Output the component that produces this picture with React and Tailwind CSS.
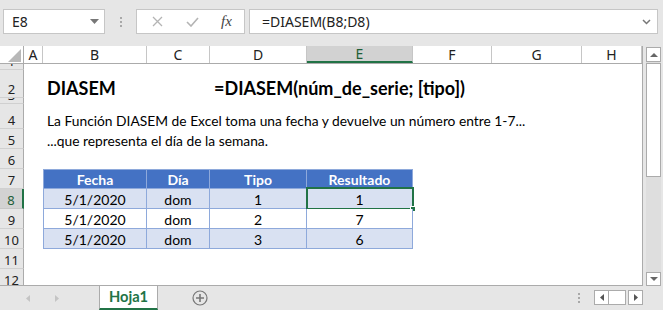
import React from "react";

const COLS = [
  { key: "A", w: "w-[19px]" },
  { key: "B", w: "w-[104px]" },
  { key: "C", w: "w-[63px]" },
  { key: "D", w: "w-[97px]" },
  { key: "E", w: "w-[106px]" },
  { key: "F", w: "w-[79px]" },
  { key: "G", w: "w-[90px]" },
  { key: "H", w: "w-[60px]" },
];

const TABLE = [
  ["5/1/2020", "dom", "1", "1"],
  ["5/1/2020", "dom", "2", "7"],
  ["5/1/2020", "dom", "3", "6"],
];

const cellFont = { fontFamily: "Lato, 'Liberation Sans', sans-serif" };
const uiFont = { fontFamily: "'Noto Sans', 'Open Sans', sans-serif" };

function RowHead({ label, h, selected }) {
  return (
    <div
      className={`${h} w-[24px] shrink-0 overflow-hidden flex items-end justify-center border-b border-r text-[13px] leading-[16px] ${
        selected
          ? "bg-[#d2d2d2] border-b-[#c6c6c6] border-r-2 border-r-[#217346] text-[#1e5e38]"
          : "bg-[#e6e6e6] border-b-[#d0d0d0] border-r-[#ababab] text-[#222]"
      }`}
      style={uiFont}>
      {label}
    </div>
  );
}

function TextRow({ label, h, children }) {
  return (
    <div className={`flex ${h} shrink-0`}>
      <RowHead h={h} label={label} />
      <div className="relative flex-1 flex items-end" style={cellFont}>
        {children}
      </div>
    </div>
  );
}

function TableRow({ label, cells, header, striped, selected }) {
  const widths = ["w-[104px]", "w-[63px]", "w-[97px]", "w-[106px]"];
  return (
    <div className="flex h-[20px] shrink-0" style={cellFont}>
      <RowHead h="h-[20px]" label={label} selected={selected} />
      <div className="w-[19px] shrink-0" />
      {cells.map((c, i) => (
        <div
          key={i}
          className={`${widths[i]} relative shrink-0 flex items-end justify-center text-[14px] leading-[16px] border-r border-b border-[#8ea9db] ${
            i === 0 ? "border-l" : ""
          } ${header ? "border-t bg-[#4472c4] text-white font-bold" : striped ? "bg-[#d9e1f2] text-black" : "bg-white text-black"}`}>
          {c}
          {selected && i === 3 ? (
            <>
              <span className="absolute -left-[1px] -top-[2px] -right-[2px] -bottom-[2px] border-2 border-[#217346]" />
              <span className="absolute -right-[4px] -bottom-[4px] w-[6px] h-[6px] bg-[#217346] border border-white" />
            </>
          ) : null}
        </div>
      ))}
    </div>
  );
}

function Toolbar() {
  return (
    <div className="h-[46px] shrink-0 flex items-start pt-[9px] pl-[3px]">
      <div className="w-[102px] h-[25px] bg-white border border-[#c6c6c6] flex items-center justify-between pl-[8px] pr-[5px]">
        <span className="text-[14px] text-[#222]" style={uiFont}>E8</span>
        <svg width="9" height="5" viewBox="0 0 9 5">
          <path d="M0 0h9L4.5 5z" fill="#777" />
        </svg>
      </div>
      <div className="w-[31px] h-[25px] flex flex-col items-center justify-center gap-[2px]">
        <span className="w-[2px] h-[2px] bg-[#a8a8a8]" />
        <span className="w-[2px] h-[2px] bg-[#a8a8a8]" />
        <span className="w-[2px] h-[2px] bg-[#a8a8a8]" />
      </div>
      <div className="w-[109px] h-[25px] bg-white border border-[#c6c6c6] flex items-center">
        <svg className="ml-[15px]" width="11" height="11" viewBox="0 0 11 11">
          <path d="M1 1l9 9M10 1l-9 9" stroke="#b4b4b4" strokeWidth="1.3" />
        </svg>
        <svg className="ml-[23px]" width="13" height="10" viewBox="0 0 13 10">
          <path d="M1 5l4 4 7-8" stroke="#b4b4b4" strokeWidth="1.6" fill="none" />
        </svg>
        <span
          className="ml-[22px] italic text-[15px] text-[#444]"
          style={{ fontFamily: "'Liberation Serif', serif" }}>
          fx
        </span>
      </div>
      <div className="ml-[4px] w-[409px] h-[25px] bg-white border border-[#c6c6c6] flex items-center justify-between pl-[12px] pr-[6px]">
        <span className="text-[14px] text-[#222]" style={uiFont}>=DIASEM(B8;D8)</span>
        <svg width="9" height="6" viewBox="0 0 9 6">
          <path d="M1 1l3.5 3.5L8 1" stroke="#777" strokeWidth="1.5" fill="none" />
        </svg>
      </div>
    </div>
  );
}

function ColHeaders() {
  return (
    <div className="flex h-[18px] shrink-0 border-b border-[#ababab]" style={uiFont}>
      <div className="w-[24px] shrink-0 border-r border-[#ababab] flex items-end justify-end pr-[2px] pb-[1px]">
        <svg width="13" height="13" viewBox="0 0 13 13">
          <path d="M13 0v13H0z" fill="#b8b8b8" />
        </svg>
      </div>
      {COLS.map((c) => (
        <div
          key={c.key}
          className={`${c.w} shrink-0 flex items-center justify-center text-[14px] border-r border-[#c6c6c6] ${
            c.key === "E"
              ? "bg-[#d2d2d2] text-[#1e5e38] border-b-2 border-b-[#217346]"
              : "text-[#222]"
          }`}>
          {c.key}
        </div>
      ))}
    </div>
  );
}

function Scrollbar() {
  return (
    <div className="w-[20px] shrink-0 flex flex-col pl-[3px] pr-[2px] pt-[1px]">
      <div className="h-[15px] bg-white border border-[#ababab] flex items-center justify-center">
        <svg width="8" height="4" viewBox="0 0 8 4">
          <path d="M4 0l4 4H0z" fill="#666" />
        </svg>
      </div>
      <div className="flex-1 bg-[#dedede] flex flex-col">
        <div className="mt-[1px] h-[114px] bg-white border border-[#ababab]" />
      </div>
      <div className="h-[14px] bg-white border border-[#ababab] flex items-center justify-center">
        <svg width="8" height="4" viewBox="0 0 8 4">
          <path d="M0 0h8L4 4z" fill="#666" />
        </svg>
      </div>
    </div>
  );
}

function BottomBar() {
  return (
    <div className="h-[24px] shrink-0 flex items-stretch">
      <div className="w-[99px] shrink-0 flex items-center pl-[26px] gap-[25px]">
        <svg width="4" height="7" viewBox="0 0 4 7">
          <path d="M4 0v7L0 3.5z" fill="#c4c4c4" />
        </svg>
        <svg width="4" height="7" viewBox="0 0 4 7">
          <path d="M0 0v7l4-3.5z" fill="#c4c4c4" />
        </svg>
      </div>
      <div
        className="w-[59px] shrink-0 bg-white border-x border-[#ababab] border-b-2 border-b-[#217346] flex items-center justify-center text-[14.67px] font-bold text-[#217346]"
        style={cellFont}>
        Hoja1
      </div>
      <div className="ml-[34px] flex items-center">
        <svg width="16" height="16" viewBox="0 0 16 16">
          <circle cx="8" cy="8" r="7" fill="none" stroke="#777" strokeWidth="1.2" />
          <path d="M8 4v8M4 8h8" stroke="#777" strokeWidth="1.6" />
        </svg>
      </div>
      <div className="flex-1" />
      <div className="flex flex-col justify-center gap-[2px] mr-[14px]">
        <span className="w-[2px] h-[2px] bg-[#a8a8a8]" />
        <span className="w-[2px] h-[2px] bg-[#a8a8a8]" />
        <span className="w-[2px] h-[2px] bg-[#a8a8a8]" />
      </div>
      <div className="flex items-center pb-[1px]">
        <div className="w-[15px] h-[15px] bg-white border border-[#ababab] flex items-center justify-center">
          <svg width="4" height="7" viewBox="0 0 4 7">
            <path d="M4 0v7L0 3.5z" fill="#555" />
          </svg>
        </div>
        <div className="w-[17px] h-[15px] bg-white border-y border-r border-[#ababab]" />
        <div className="ml-[2px] w-[15px] h-[15px] bg-white border border-[#ababab] flex items-center justify-center">
          <svg width="4" height="7" viewBox="0 0 4 7">
            <path d="M0 0v7l4-3.5z" fill="#555" />
          </svg>
        </div>
      </div>
      <div className="w-[20px] shrink-0" />
    </div>
  );
}

export default function App() {
  return (
    <div className="w-[663px] h-[310px] bg-[#e6e6e6] flex flex-col overflow-hidden">
      <Toolbar />
      <div className="flex h-[240px] shrink-0">
        <div className="w-[643px] shrink-0 flex flex-col bg-white border-r border-b border-[#ababab] overflow-hidden">
          <ColHeaders />
          <TextRow h="h-[6px]" label="1" />
          <TextRow h="h-[28px]" label="2">
            <span className="absolute left-[23px] bottom-0 whitespace-nowrap text-[18px] font-bold leading-[20px] text-black">
              DIASEM
            </span>
            <span className="absolute left-[190px] bottom-0 whitespace-nowrap text-[18px] font-bold leading-[20px] text-black">
              =DIASEM(núm_de_serie; [tipo])
            </span>
          </TextRow>
          <TextRow h="h-[6px]" label="3" />
          <TextRow h="h-[25px]" label="4">
            <span className="pl-[23px] whitespace-nowrap text-[13.8px] leading-[16px] text-black">
              La Función DIASEM de Excel toma una fecha y devuelve un número entre 1-7...
            </span>
          </TextRow>
          <TextRow h="h-[20px]" label="5">
            <span className="pl-[23px] whitespace-nowrap text-[13.8px] leading-[16px] text-black">
              ...que representa el día de la semana.
            </span>
          </TextRow>
          <TextRow h="h-[20px]" label="6" />
          <TableRow label="7" header cells={["Fecha", "Día", "Tipo", "Resultado"]} />
          <TableRow label="8" striped selected cells={TABLE[0]} />
          <TableRow label="9" cells={TABLE[1]} />
          <TableRow label="10" striped cells={TABLE[2]} />
          <TextRow h="h-[20px]" label="11" />
          <TextRow h="h-[20px]" label="12" />
        </div>
        <Scrollbar />
      </div>
      <BottomBar />
    </div>
  );
}
